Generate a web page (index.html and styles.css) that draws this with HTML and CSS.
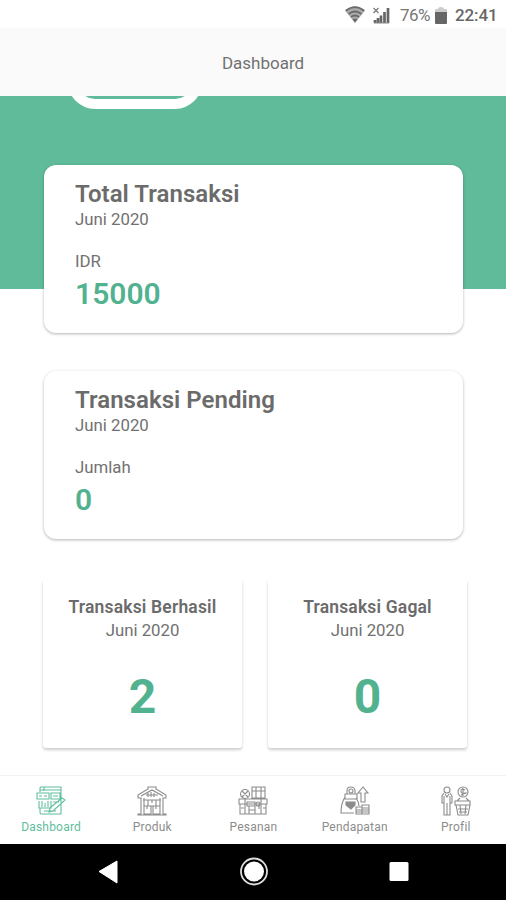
FILE: index.html
```html
<!DOCTYPE html>
<html lang="id">
<head>
<meta charset="utf-8">
<title>Dashboard</title>
<link rel="stylesheet" href="styles.css">
</head>
<body>
<div class="screen">
  <div class="status">
    <svg class="wifi" width="20" height="17" viewBox="0 0 20 17"><path d="M0 4.5Q10-3.5 20 4.5L10 17Z" fill="#aaa"/><path d="M.8 4.7Q10-2.5 19.2 4.7M3.5 8Q10 3 16.500 8M6 11Q10 8 14 11" fill="none" stroke="#6b6b6b" stroke-width="1.8"/><path d="M7.500 13.500Q10 11.500 12.500 13.500L10 16.500Z" fill="#6b6b6b"/></svg>
    <svg class="signal" width="17" height="17" viewBox="0 0 17 17"><path d="M.5 1l5 5m0-5l-5 5" stroke="#777" stroke-width="1.200"/><path d="M2 16v-3M5 16v-5M8 16V8.500M11.500 16V5M15 16V1" stroke="#666" stroke-width="2.700"/><path d="M1 16h15" stroke="#888"/></svg>
    <span class="percent">76%</span>
    <svg class="battery" width="12" height="18" viewBox="0 0 12 18"><path d="M0 5V3Q0 2 1 2H3Q3 0 6 0T9 2h2q1 0 1 1v2z" fill="#ccc"/><path d="M0 5h12v11q0 1-1 1H1q-1 0-1-1z" fill="#666"/></svg>
    <span class="time">22:41</span>
  </div>
  <header class="header">Dashboard</header>
  <main class="content">
    <div class="pill"></div>
    <section class="card">
      <h2>Total Transaksi</h2>
      <p class="month">Juni 2020</p>
      <p class="label">IDR</p>
      <p class="value">15000</p>
    </section>
    <section class="card">
      <h2>Transaksi Pending</h2>
      <p class="month">Juni 2020</p>
      <p class="label">Jumlah</p>
      <p class="value">0</p>
    </section>
    <div class="tiles">
      <section class="tile"><h3>Transaksi Berhasil</h3><p>Juni 2020</p><strong>2</strong></section>
      <section class="tile"><h3>Transaksi Gagal</h3><p>Juni 2020</p><strong>0</strong></section>
    </div>
  </main>
  <nav class="tabs">
    <a class="tab active">
      <svg viewBox="0 0 30 30"><path d="M4 6V2q0-1 1-1h20v27H5q-1 0-1-2v-4M4 4h21M8 1v4M1 7h12v6H1zM15 7h9v6h-9zM3 10h3M8 10h3M17 10h5M3 15v7h12v-7M6 15v6M9 17v4M12 15v6M17 16h6M8 25h12M14 22l12-10 3 2-12 11-4 1z"/></svg>
      <span>Dashboard</span>
    </a>
    <a class="tab">
      <svg viewBox="0 0 30 30"><path d="M1 9L11 3V1h8v2l10 6v3h-3v16h3v1H1v-1h3V12H1zM4 10L15 4l11 6M9 9h12M11 7v4M14 6v5M17 7v4M6 14h18M7 12v16M23 12v16M7 20h7v8H7zM16 20h7v8h-7zM11 14h8v6h-8zM10 20v3M19 20v3M15 14v3"/></svg>
      <span>Produk</span>
    </a>
    <a class="tab">
      <svg viewBox="0 0 30 30"><circle cx="7" cy="8" r="4.500"/><path d="M4 5l6 6M10 5l-6 6M14 1h13v11H14zM14 5h13M18 1v11M23 1v11M1 13h28v5H1zM2 18v10h26V18M7 13v15M23 13v15M9 16h8v4H9zM11 20v8M17 20v8M11 24h6M21 18v5M3 22h3M25 22h3"/><circle cx="20" cy="18" r="2"/></svg>
      <span>Pesanan</span>
    </a>
    <a class="tab">
      <svg viewBox="0 0 30 30"><path d="M7 8V5q0-4 4-4t4 4v3M5 8h12v5H5zM5 11Q1 17 1 27h13M16 12q3 4 3 8M23 1l5 6h-3v9h-4V7h-3zM16 21h6v7h-6zM22 19h7v9h-7zM16 24h13M22 22h7M16 26h13"/><circle cx="11" cy="5" r="2"/><path d="M6 16h9v3l-4 4-5-4z" fill="currentColor"/></svg>
      <span>Pendapatan</span>
    </a>
    <a class="tab">
      <svg viewBox="0 0 30 30"><circle cx="6" cy="4" r="3"/><path d="M3 7L1 10v7h2v12h6V17h2v-7L9 7M6 17v12M3 10v7M9 10v7M4 8l2 3 2-3M16 15l3-3M25 12l3 3M14 15h15v4H14zM15 19l2 10h10l2-10M19 19l1 9M25 19l-1 9M17 23h10M18 26h8M22 2v8M24 4q-4-2-4 1t4 2-4 2"/><circle cx="22" cy="6" r="5"/></svg>
      <span>Profil</span>
    </a>
  </nav>
  <div class="system">
    <svg viewBox="0 0 30 30"><path d="M6 15.500L24 5v22z" fill="#fff" stroke="#fff" stroke-linejoin="round"/></svg>
    <svg viewBox="0 0 30 30"><circle cx="15" cy="15.500" r="13" fill="none" stroke="#ddd" stroke-width="1.800"/><circle cx="15" cy="15.500" r="10" fill="#fff"/></svg>
    <svg viewBox="0 0 30 30"><rect x="5.500" y="6" width="19" height="19" rx="1.500" fill="#fff"/></svg>
  </div>
</div>
</body>
</html>
```
FILE: styles.css
```css
* { box-sizing: border-box; }
body, h2, h3, p { margin: 0; }
body { font-family: Roboto, "Liberation Sans", sans-serif; color: #717171; background: #fff; }
.screen { width: 506px; height: 900px; display: flex; flex-direction: column; overflow: hidden; }
.status { height: 28px; flex: none; display: flex; align-items: center; justify-content: flex-end; padding: 3px 9px 0 0; color: #666; }
.wifi { margin: 0 8px 2px 0; }
.signal { margin-right: 10px; }
.percent { font-size: 17px; width: 31px; letter-spacing: -.6px; margin: -1px 4px 0 0; color: #777; }
.battery { margin-right: 8px; }
.time { font-size: 17px; font-weight: 500; width: 42px; letter-spacing: -.1px; margin-top: -1px; }
.header { height: 68px; flex: none; background: #fafafa; display: flex; align-items: center; justify-content: center; font-size: 17px; padding: 2px 0 0 20px; }
.content { height: 679px; flex: none; overflow: hidden; padding: 0 39px 0 43px; background: linear-gradient(#60bb9a 193px, #fff 193px); }
.pill { width: 134px; height: 70px; margin: -57px 0 56px 25px; border: 10px solid #fff; border-radius: 27px; }
.card { width: 419px; height: 168px; margin: 0 0 38px 1px; padding: 14px 31px; border-radius: 12px; background: #fff; box-shadow: 0 1px 3px #0000004d; }
.card h2 { font-size: 24px; line-height: 30px; font-weight: 600; letter-spacing: .04px; color: #6b6b6b; }
.month, .label { font-size: 16.8px; line-height: 20px; }
.label { margin-top: 22px; }
.value { font-size: 30px; line-height: 36px; font-weight: 600; color: #52b28f; margin-top: 5px; }
.tiles { display: flex; gap: 26px; margin-top: 40px; }
.tile { width: 199px; flex: none; height: 169px; padding-top: 17px; text-align: center; background: #fff; border-radius: 3px; box-shadow: 0 2px 3px #0003; }
.tile h3 { font-size: 17.5px; line-height: 22px; font-weight: 600; letter-spacing: .17px; color: #6b6b6b; }
.tile p { font-size: 16.8px; line-height: 24px; }
.tile strong { display: block; font-size: 48px; line-height: 56px; font-weight: 700; color: #52b28f; margin-top: 27px; }
.tabs { height: 69px; flex: none; display: grid; grid-template-columns: repeat(5, 1fr); border-top: 1px solid #f3f3f3; background: #fff; }
.tab { display: flex; flex-direction: column; align-items: center; padding: 10px 0 0 1px; color: #8c8c8c; font-size: 12px; line-height: 16px; letter-spacing: .2px; }
.tab svg { width: 30px; height: 30px; margin-bottom: 3px; fill: none; stroke: currentColor; stroke-width: 1.1; }
.tab.active { color: #62be9d; }
.system { height: 56px; flex: none; background: #000; display: flex; justify-content: space-between; padding: 12px 92px 0 93px; }
.system svg { width: 30px; height: 30px; }
```
